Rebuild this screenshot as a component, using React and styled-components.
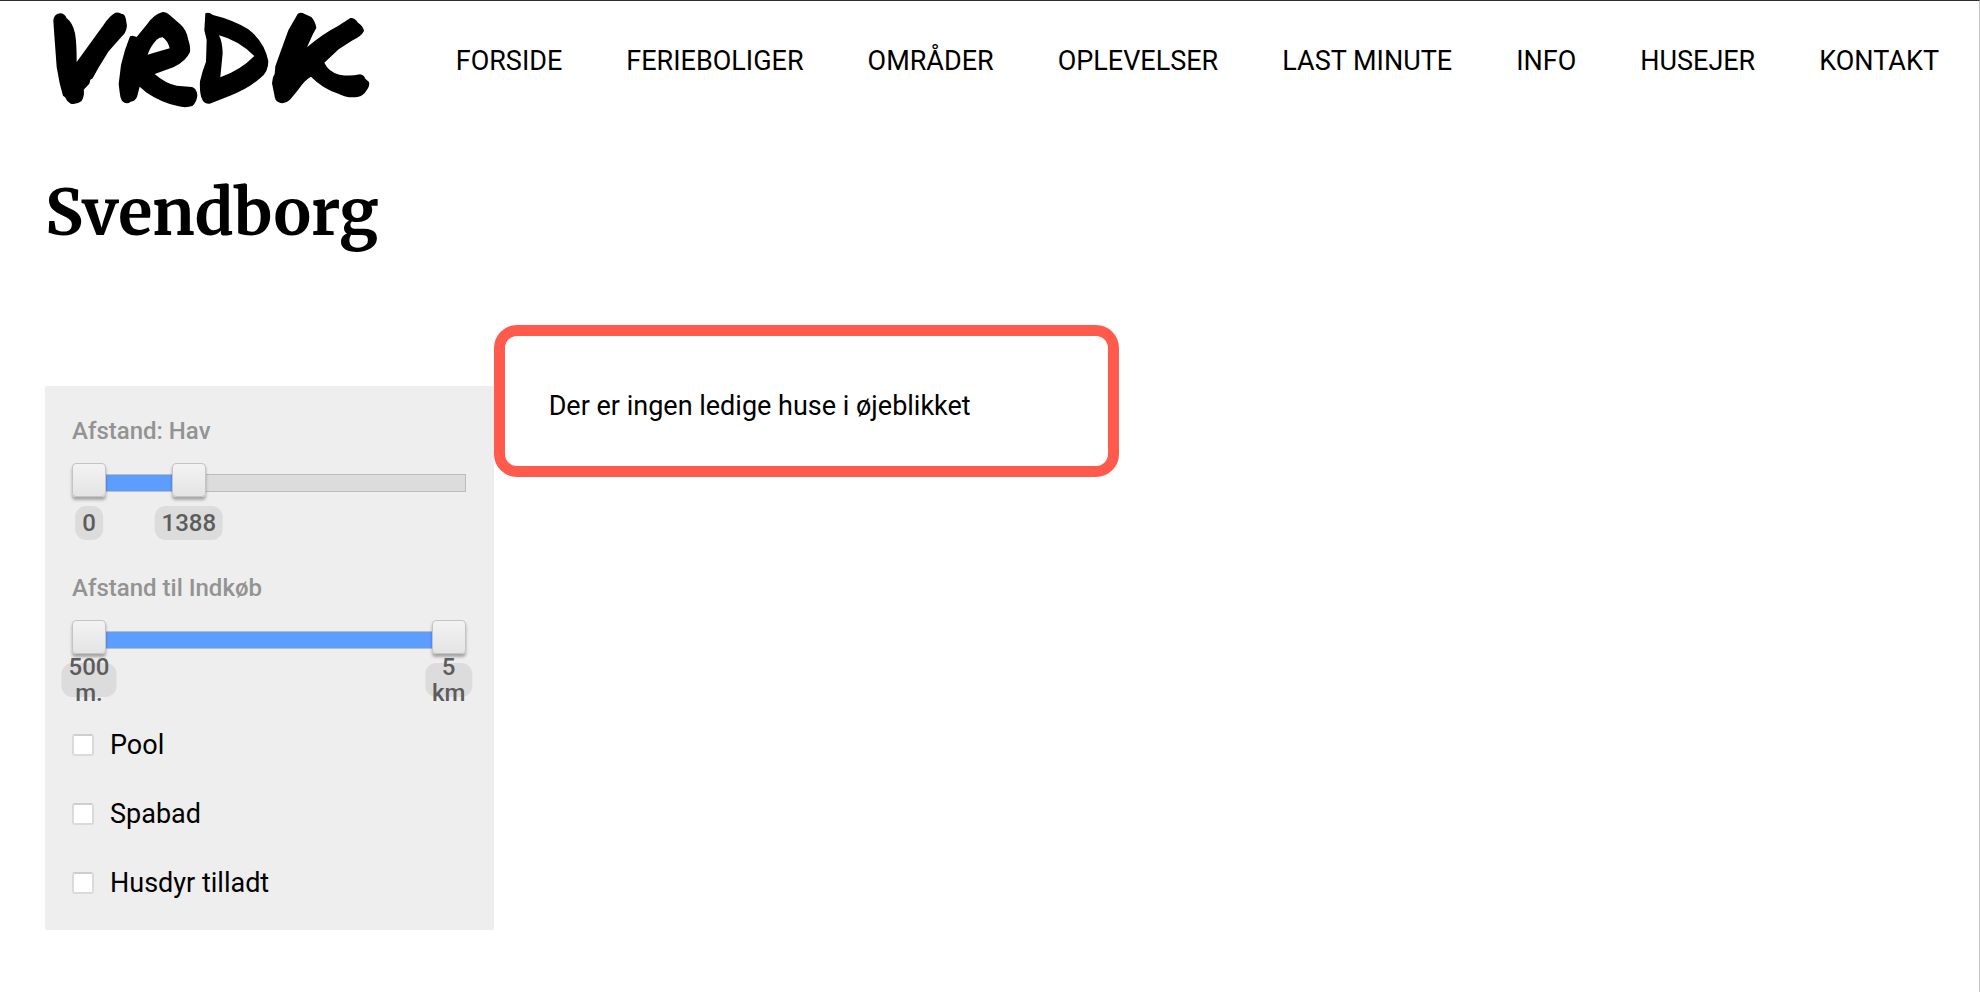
import React, { useState } from 'react';
import styled, { createGlobalStyle } from 'styled-components';

const GlobalStyle = createGlobalStyle`
  *, *::before, *::after { box-sizing: border-box; }
  body {
    margin: 0;
    background: #fff;
    color: #000;
    font-family: Roboto, "Liberation Sans", sans-serif;
    font-size: 27px;
    line-height: 32px;
  }
`;

const Page = styled.div`
  min-height: 100vh;
  border-top: 1px solid #2f2d30;
  border-right: 1px solid #c4c4c4;
`;

const Header = styled.header`
  display: flex;
  align-items: flex-start;
  justify-content: space-between;
  padding: 9px 40px 0 52px;
`;

const LogoLink = styled.a`
  flex: none;
  display: block;
  color: #000;
`;

const LogoMark = styled.svg`
  display: block;
  width: 320px;
  height: 98px;
`;

const Nav = styled.nav`
  display: flex;
  gap: 64px;
  padding-top: 35px;
`;

const NavLink = styled.a`
  color: #000;
  text-decoration: none;
  white-space: nowrap;
`;

const Title = styled.h1`
  margin: 65px 45px 0;
  font-family: Merriweather, "Liberation Serif", serif;
  font-size: 63px;
  line-height: 80px;
  font-weight: 700;
`;

const Content = styled.main`
  display: grid;
  grid-template-columns: 19fr 61fr;
  align-items: start;
  padding: 72px 45px 0;
`;

const Filters = styled.form`
  margin-top: 61px;
  padding: 29px 28px 31px 27px;
  border-radius: 2px;
  background: #eee;
`;

const FilterGroup = styled.fieldset`
  height: 157px;
  margin: 0;
  padding: 0;
  border: 0;
  min-width: 0;
`;

const FilterLabel = styled.legend`
  padding: 0;
  color: #939393;
  font-size: 24px;
  line-height: 32px;
  font-weight: 500;
`;

const Slider = styled.div`
  position: relative;
  height: 34px;
  margin-top: 16px;
  display: flex;
  align-items: center;
`;

const Track = styled.div`
  width: 100%;
  height: 18px;
  margin-top: 6px;
  padding: 0 17px;
  border: 1px solid #bcbcbc;
  background: #dcdcdc;
`;

const Fill = styled.div`
  height: 100%;
  background: #5c9dff;
`;

const Range = styled.input`
  position: absolute;
  inset: 0;
  width: 100%;
  height: 34px;
  margin: 0;
  appearance: none;
  background: transparent;
  pointer-events: none;

  &::-webkit-slider-thumb {
    appearance: none;
    width: 34px;
    height: 34px;
    border: 1px solid #c4c4c4;
    border-radius: 4px;
    background: linear-gradient(#f3f3f3, #e4e4e4);
    box-shadow: 0 3px 3px rgba(0, 0, 0, 0.3);
    pointer-events: auto;
    cursor: pointer;
  }
`;

const Scale = styled.div`
  position: relative;
  height: 34px;
  margin: 9px 17px 0;
`;

const Bubble = styled.output`
  position: absolute;
  transform: translateX(-50%);
  display: flex;
  align-items: center;
  justify-content: center;
  height: 34px;
  padding: 0 7px;
  border-radius: 11px;
  background: #dcdcdc;
  color: #5c5c5c;
  font-size: 24px;
  line-height: 26px;
  font-weight: 500;
  text-align: center;
  white-space: pre;
`;

const Checks = styled.div`
  display: grid;
  gap: 37px;
`;

const CheckLabel = styled.label`
  display: flex;
  align-items: center;
  gap: 16px;
`;

const CheckBox = styled.input`
  appearance: none;
  width: 22px;
  height: 22px;
  margin: 0;
  border: 2px solid #dadada;
  border-top-color: #cecece;
  border-radius: 3px;
  background: #fff;

  &:checked { background: #5c9dff; }
`;

const Notice = styled.section`
  width: 100%;
  max-width: 625px;
  min-height: 152px;
  padding: 54px 44px 44px;
  border: 11px solid #ff5a4c;
  border-radius: 23px;

  p { margin: 0; }
`;

const links = ['FORSIDE', 'FERIEBOLIGER', 'OMRÅDER', 'OPLEVELSER', 'LAST MINUTE', 'INFO', 'HUSEJER', 'KONTAKT'];
const facilities = ['Pool', 'Spabad', 'Husdyr tilladt'];

const Logo = () => (
  <LogoMark viewBox="66 30 960 294" fill="currentColor" fillRule="evenodd" role="img" aria-label="VRDK">
    <path d="M70 62Q71 43 90 40Q104 40 110 55Q128 68 135 100Q140 125 140 186L220 76Q238 47 256 38Q270 36 275 42Q286 39 289 66Q294 82 284 100L236 154L205 204L188 235L181 239L178 251L161 269Q165 284 155 303Q142 314 122 311Q109 303 105 292L99 287L89 250L80 201L74 120Z" />
    <path d="M300 109L308 107L320 111L350 74Q372 43 396 37Q407 34 418 44L450 72Q469 88 475 119Q482 139 480 156Q468 184 430 202L374 222Q407 251 440 257L486 261Q500 265 502 285Q501 306 487 318Q466 325 443 318Q395 308 350 278L329 260L321 291Q314 305 302 305Q290 315 276 303Q270 293 269 277L266 252L273 195L285 150ZM353 164L367 160L419 145Q413 122 398 112Q389 112 380 119Q361 139 353 164Z" />
    <path d="M526 40Q536 35 549 45Q607 59 654 87Q704 125 715 184Q715 217 691 234Q654 267 600 287L539 311Q523 312 517 299Q508 283 510 244L518 214L528 185L530 120L523 91ZM567 106Q577 125 578 160L571 232Q632 210 673 168Q625 121 567 106Z" />
    <path d="M803 42Q812 35 824 42L844 51Q856 64 859 84L849 102L831 142Q877 102 924 78L961 54Q975 53 984 68Q999 77 1002 93Q994 109 968 121L926 148L883 188Q895 215 928 224Q959 230 990 223Q1001 224 1006 236L1017 246Q1020 257 1011 269Q1000 288 982 291Q951 295 925 281Q878 266 843 230Q825 239 804 270L780 299Q763 315 746 307Q734 301 733 284L726 250L729 232L734 222L736 199L750 160L775 91Z" />
  </LogoMark>
);

function RangeFilter({ label, min, max, start, end, format }) {
  const [low, setLow] = useState(start);
  const [high, setHigh] = useState(end);
  const place = (value) => ((value - min) / (max - min)) * 100;

  return (
    <FilterGroup>
      <FilterLabel>{label}</FilterLabel>
      <Slider>
        <Track>
          <Fill style={{ marginLeft: `${place(low)}%`, width: `${place(high) - place(low)}%` }} />
        </Track>
        <Range type="range" aria-label={`${label} fra`} min={min} max={max} value={low}
          onChange={(e) => setLow(Math.min(Number(e.target.value), high))} />
        <Range type="range" aria-label={`${label} til`} min={min} max={max} value={high}
          onChange={(e) => setHigh(Math.max(Number(e.target.value), low))} />
      </Slider>
      <Scale>
        <Bubble style={{ left: `${place(low)}%` }}>{format(low)}</Bubble>
        <Bubble style={{ left: `${place(high)}%` }}>{format(high)}</Bubble>
      </Scale>
    </FilterGroup>
  );
}

const formatDistance = (m) => (m < 1000 ? `${m}\nm.` : `${m / 1000}\nkm`);

export default function App() {
  return (
    <Page>
      <GlobalStyle />
      <Header>
        <LogoLink href="#"><Logo /></LogoLink>
        <Nav>
          {links.map((text) => <NavLink href="#" key={text}>{text}</NavLink>)}
        </Nav>
      </Header>
      <Title>Svendborg</Title>
      <Content>
        <Filters>
          <RangeFilter label="Afstand: Hav" min={0} max={5000} start={0} end={1388} format={String} />
          <RangeFilter label="Afstand til Indkøb" min={500} max={5000} start={500} end={5000} format={formatDistance} />
          <Checks>
            {facilities.map((name) => (
              <CheckLabel key={name}>
                <CheckBox type="checkbox" />
                {name}
              </CheckLabel>
            ))}
          </Checks>
        </Filters>
        <Notice>
          <p>Der er ingen ledige huse i øjeblikket</p>
        </Notice>
      </Content>
    </Page>
  );
}
